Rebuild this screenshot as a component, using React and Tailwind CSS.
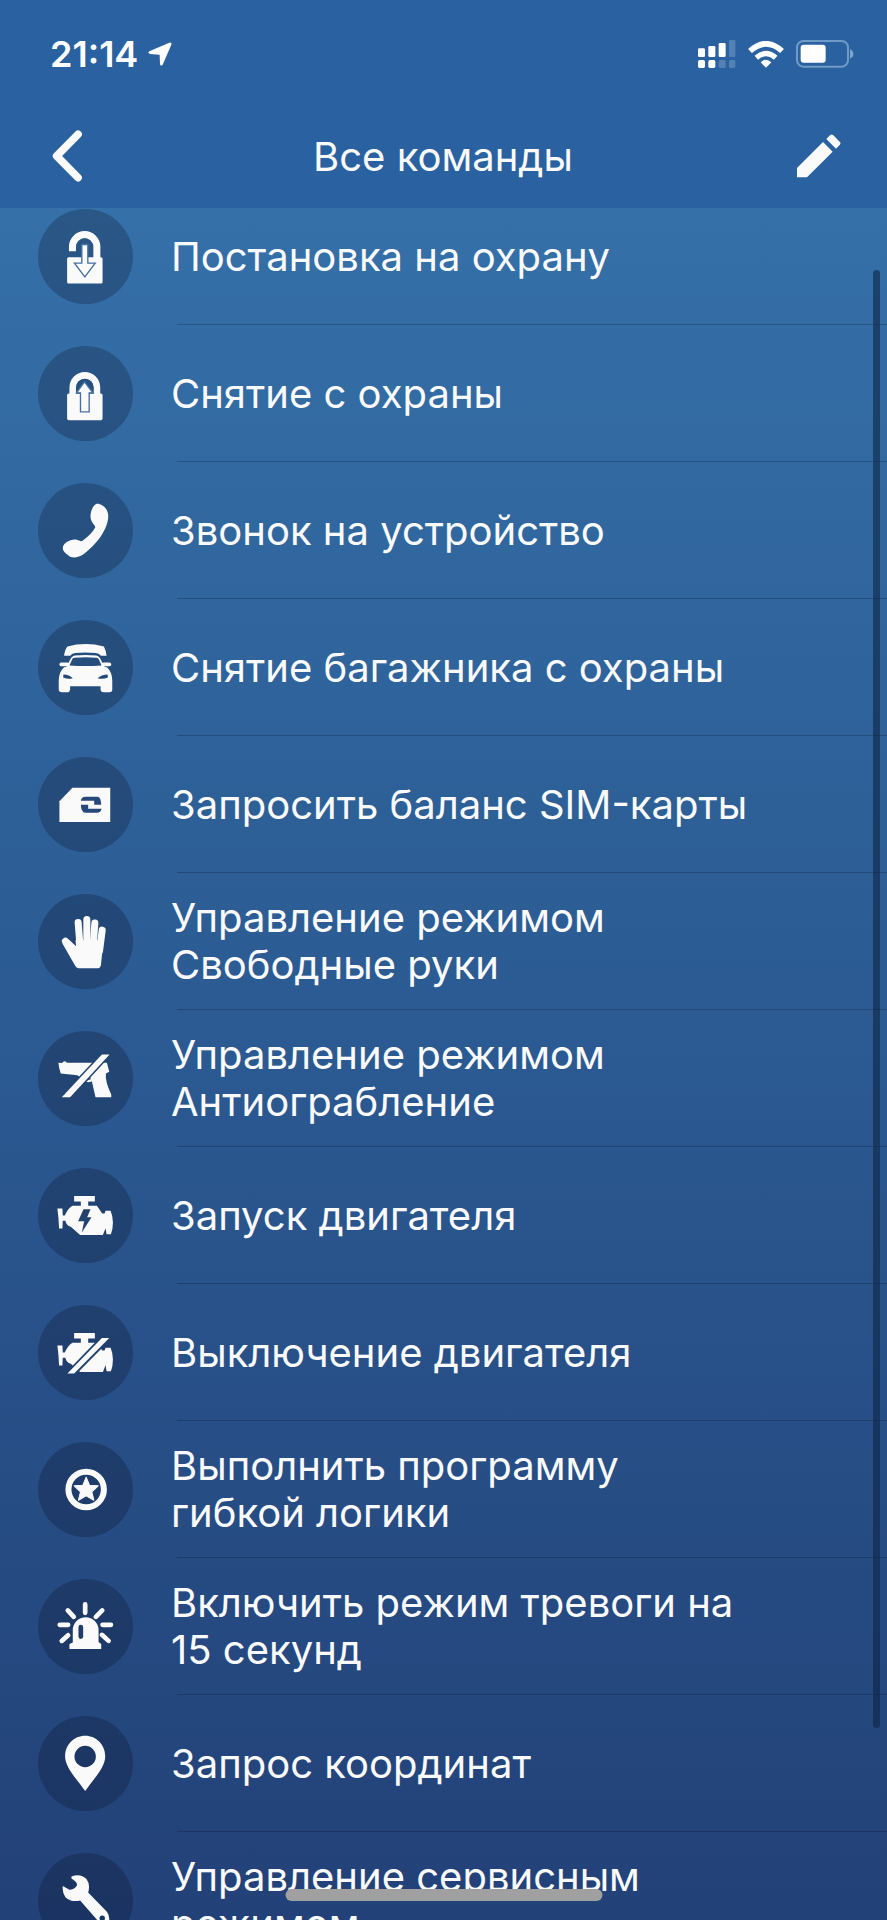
const ICON = '#fafafa';

// Every command glyph is drawn on a 284x284 canvas, the full size of its round badge
function Glyph({ children }) {
    return (
        <svg viewBox="0 0 284 284" className="w-full h-full" fill={ICON} aria-hidden="true">
            {children}
        </svg>
    );
}

const LockDownIcon = () => (
    <Glyph>
        <path d="M103 126V113a36 36 0 0 1 73 0V150" fill="none" stroke={ICON} strokeWidth="21" />
        <rect x="87" y="144" width="106" height="79" rx="5" />
        <path d="M131 106H149V162H171L140 203L109 162H131Z" stroke="#44709f" strokeWidth="4" />
    </Glyph>
);

const LockUpIcon = () => (
    <Glyph>
        <path d="M104 150V124a36 36 0 0 1 72 0V150" fill="none" stroke={ICON} strokeWidth="20" />
        <rect x="87" y="142" width="106" height="80" rx="5" />
        <path d="M114 142V124a26 26 0 0 1 52 0V142Z" fill="#28507f" />
        <path d="M139 107L164 140H153V197H127V140H115Z" stroke="#44709f" strokeWidth="4" />
    </Glyph>
);

const PhoneIcon = () => (
    <Glyph>
        <path d="M178 62C190 62 210 76 210 98C210 136 178 182 135 214C120 224 100 226 90 216C80 208 74 202 74 194C76 178 100 166 116 170C124 172 128 177 134 172C152 158 164 146 171 133C172 124 156 118 157 98C158 78 168 62 178 62Z" />
    </Glyph>
);

const CarIcon = () => (
    <Glyph>
        <path d="M88 79Q142 65 197 79Q203 90 205 107H188Q183 100 172 99Q140 96 112 99Q102 100 96 107H78Q80 88 88 79Z" />
        <path
            fillRule="evenodd"
            d="M82 144L92 128Q98 109 110 106Q142 103 174 106Q186 109 192 128L202 144ZM94 136L103 116Q105 113 110 113Q142 109 175 113Q180 113 182 118L190 136Q142 140 94 136Z"
        />
        <rect x="64" y="127" width="30" height="11" rx="5" />
        <rect x="190" y="127" width="29" height="11" rx="5" />
        <path d="M78 141Q142 134 206 141Q222 156 222 180V208Q222 216 214 216H196Q188 216 187 208V198H96V208Q95 216 88 216H72Q62 216 62 208V180Q62 156 78 141Z" />
        <path d="M76 163Q94 164 104 174Q90 178 75 172ZM208 163Q190 164 178 174Q194 178 209 172Z" fill="#25497a" />
    </Glyph>
);

const SimIcon = () => (
    <Glyph>
        <path d="M64 132L103 92H216V194H64Z" />
        <path d="M128 131Q130 119 142 119H178Q188 119 189 143H168V131ZM190 155Q188 167 176 167H140Q129 165 128 143H150V155Z" fill="#25497a" />
    </Glyph>
);

const HandIcon = () => (
    <Glyph>
        <g fill="none" stroke={ICON} strokeWidth="21" strokeLinecap="round">
            <path d="M120 85L126 160" />
            <path d="M146 76V150" />
            <path d="M170 87L165 155" />
            <path d="M192 108L184 170" />
            <path d="M82 141L116 182" />
        </g>
        <path d="M112 138H196L188 214Q186 222 178 222H122Q116 222 112 216L73 148L92 136L114 156Z" />
    </Glyph>
);

const NoGunIcon = () => (
    <Glyph>
        <path d="M61 95L72 96Q79 86 86 95H206L213 122L203 127Q200 150 219 190V198H172L161 150Q150 157 138 149L118 132L68 127Q62 110 61 95Z" />
        <path d="M152 132Q158 138 158 144L146 148Z" fill="#234471" />
        <path d="M71 198H96L214 70H191Z" stroke="#234471" strokeWidth="9" />
        <path d="M71 198H96L214 70H191Z" />
    </Glyph>
);

const ENGINE =
    'M58 121H73L74 142H80Q90 120 103 113H128V100H108V84H170V100H150V113H176L192 136H199L202 128H217Q224 145 224 162Q224 184 218 198H205L202 180L194 200H126L98 176Q84 172 82 158H74L73 181H63Q62 150 58 121Z';

const EngineStartIcon = () => (
    <Glyph>
        <path d={ENGINE} />
        <path d="M136 123H157L147 147H160L131 193L138 159H120Z" fill="#22436f" />
    </Glyph>
);

const EngineStopIcon = () => (
    <Glyph>
        <path d={ENGINE} />
        <path d="M88 205H108L213 99H191Z" stroke="#20406c" strokeWidth="11" />
        <path d="M88 205H108L213 99H191Z" />
    </Glyph>
);

const StarIcon = () => (
    <Glyph>
        <circle cx="144" cy="142" r="53" fill="none" stroke={ICON} strokeWidth="18" />
        <path d="M144 105L154 129L180 131L161 149L167 174L144 161L121 174L127 149L108 131L134 129Z" stroke={ICON} strokeWidth="3" strokeLinejoin="round" />
    </Glyph>
);

const SirenIcon = () => (
    <Glyph>
        <g fill="none" stroke={ICON} strokeWidth="14" strokeLinecap="round">
            <path d="M141 76V101M89 94L107 113M192 94L173 113M65 137H90M193 137H218M90 168L71 185M191 167L211 185" />
        </g>
        <path d="M104 190V153a38 38 0 0 1 77 0V188L189 194V209H94V194Z" />
        <rect x="121" y="137" width="14" height="42" rx="7" fill="#1f3c68" />
    </Glyph>
);

const PinIcon = () => (
    <Glyph>
        <path
            fillRule="evenodd"
            d="M141 59C175 59 201 86 201 120C201 150 175 178 141 224C107 178 81 150 81 120C81 86 107 59 141 59ZM141 89a32 32 0 1 0 0 64a32 32 0 1 0 0-64Z"
        />
    </Glyph>
);

const WrenchIcon = () => (
    <Glyph>
        <path d="M100 70Q128 60 145 78Q157 94 150 118L206 176Q216 190 212 206L196 218L182 206L126 142Q100 148 82 132Q72 118 74 99L94 110Q108 110 116 98Q120 88 100 76Z" />
        <circle cx="192" cy="195" r="8" fill="#1d3763" />
    </Glyph>
);

const commands = [
    { label: 'Постановка на охрану', Icon: LockDownIcon },
    { label: 'Снятие с охраны', Icon: LockUpIcon },
    { label: 'Звонок на устройство', Icon: PhoneIcon },
    { label: 'Снятие багажника с охраны', Icon: CarIcon },
    { label: 'Запросить баланс SIM-карты', Icon: SimIcon },
    { label: 'Управление режимом Свободные руки', Icon: HandIcon },
    { label: 'Управление режимом Антиограбление', Icon: NoGunIcon },
    { label: 'Запуск двигателя', Icon: EngineStartIcon },
    { label: 'Выключение двигателя', Icon: EngineStopIcon },
    { label: 'Выполнить программу гибкой логики', Icon: StarIcon },
    { label: 'Включить режим тревоги на 15 секунд', Icon: SirenIcon },
    { label: 'Запрос координат', Icon: PinIcon },
    { label: 'Управление сервисным режимом', Icon: WrenchIcon },
];

function StatusBar() {
    return (
        <div className="flex items-center justify-between h-[108px] pl-[50px] pr-[33px] text-white">
            <div className="flex items-center gap-[10px]">
                <span className="text-[36px] leading-none font-semibold">21:14</span>
                <svg width="24" height="24" viewBox="0 0 72 72" fill="white" aria-hidden="true">
                    <path d="M4 28L64 2Q72 0 70 8L44 68Q38 74 36 66L35 38L6 36Q-2 32 4 28Z" />
                </svg>
            </div>
            <div className="flex items-center gap-3">
                {/* Dual SIM signal */}
                <svg width="38" height="28" viewBox="0 0 114 84" fill="white" aria-hidden="true">
                    <rect x="0" y="25" width="21" height="26" rx="4" />
                    <rect x="31" y="18" width="21" height="33" rx="4" />
                    <rect x="62" y="9" width="21" height="42" rx="4" />
                    <rect x="93" y="0" width="19" height="51" rx="4" opacity="0.2" />
                    <rect x="0" y="60" width="21" height="24" rx="5" />
                    <rect x="31" y="60" width="21" height="24" rx="5" />
                    <rect x="62" y="60" width="21" height="24" rx="5" opacity="0.2" />
                    <rect x="93" y="60" width="19" height="24" rx="5" opacity="0.2" />
                </svg>
                {/* Wi-Fi */}
                <svg width="36" height="27" viewBox="0 0 108 81" fill="none" stroke="white" aria-hidden="true">
                    <path d="M6 30Q54 -13 102 30" strokeWidth="17" />
                    <path d="M25 50Q54 25 83 50" strokeWidth="16" />
                    <path d="M38 64Q54 49 70 64L54 80Z" fill="white" stroke="none" />
                </svg>
                {/* Battery */}
                <svg width="58" height="28" viewBox="0 0 174 84" fill="none" aria-hidden="true">
                    <rect x="3" y="3" width="153" height="77" rx="19" stroke="#6f9bc6" strokeWidth="6" />
                    <path d="M162 28Q172 32 172 42Q172 52 162 56Z" fill="#7da6cd" />
                    <rect x="14" y="14" width="75" height="54" rx="9" fill="white" />
                </svg>
            </div>
        </div>
    );
}

function NavBar() {
    return (
        <div className="flex items-center justify-between h-[100px] pb-1 pl-[33px] pr-[34px]">
            <button type="button" aria-label="Назад" className="flex items-center justify-center w-[68px] h-[68px]">
                <svg width="30" height="52" viewBox="0 0 90 156" fill="none" stroke={ICON} strokeWidth="23" strokeLinecap="round" strokeLinejoin="round" aria-hidden="true">
                    <path d="M78 13L14 78L78 143" />
                </svg>
            </button>
            <h1 className="text-[40px] leading-[47px] text-[#fafafa]">Все команды</h1>
            <button type="button" aria-label="Изменить" className="flex items-center justify-center w-[68px] h-[68px]">
                <svg width="44" height="44" viewBox="0 0 132 132" fill={ICON} aria-hidden="true">
                    <path d="M0 130V102L78 24L107 53L30 130Z" />
                    <path d="M88 15L99 4Q104 -1 109 4L128 23Q133 28 128 33L117 44Z" />
                </svg>
            </button>
        </div>
    );
}

function CommandRow({ label, Icon }) {
    return (
        <li>
            <button type="button" className="flex items-center gap-[38px] w-full h-[136px] pl-[38px] pr-[130px] text-left">
                <span className="shrink-0 w-[95px] h-[95px] rounded-full bg-[#090a21]/25">
                    <Icon />
                </span>
                <span className="text-[40px] leading-[47px] text-[#fafafa]">{label}</span>
            </button>
            <div className="ml-[177px] h-px bg-[#090a21]/25" />
        </li>
    );
}

export default function App() {
    return (
        <div className="relative flex flex-col h-screen overflow-hidden font-['Inter','Liberation_Sans',sans-serif] bg-[#22417a]">
            <header className="shrink-0 bg-[#2a62a1]">
                <StatusBar />
                <NavBar />
            </header>
            <main className="flex-1 min-h-0 overflow-hidden bg-linear-to-b from-[#3570a8] via-[#2b5991] to-[#224178]">
                {/* The list is scrolled slightly under the header */}
                <ul className="-mt-5">
                    {commands.map((command) => (
                        <CommandRow key={command.label} label={command.label} Icon={command.Icon} />
                    ))}
                </ul>
            </main>

            {/* Scroll thumb */}
            <div className="absolute right-[7px] top-[270px] bottom-48 w-[7px] rounded-full bg-[#0c2444]/60" />
            {/* Home indicator */}
            <div className="absolute bottom-[19px] left-1/2 -translate-x-1/2 w-[317px] h-3 rounded-full bg-[#a0a0a0]" />
        </div>
    );
}
